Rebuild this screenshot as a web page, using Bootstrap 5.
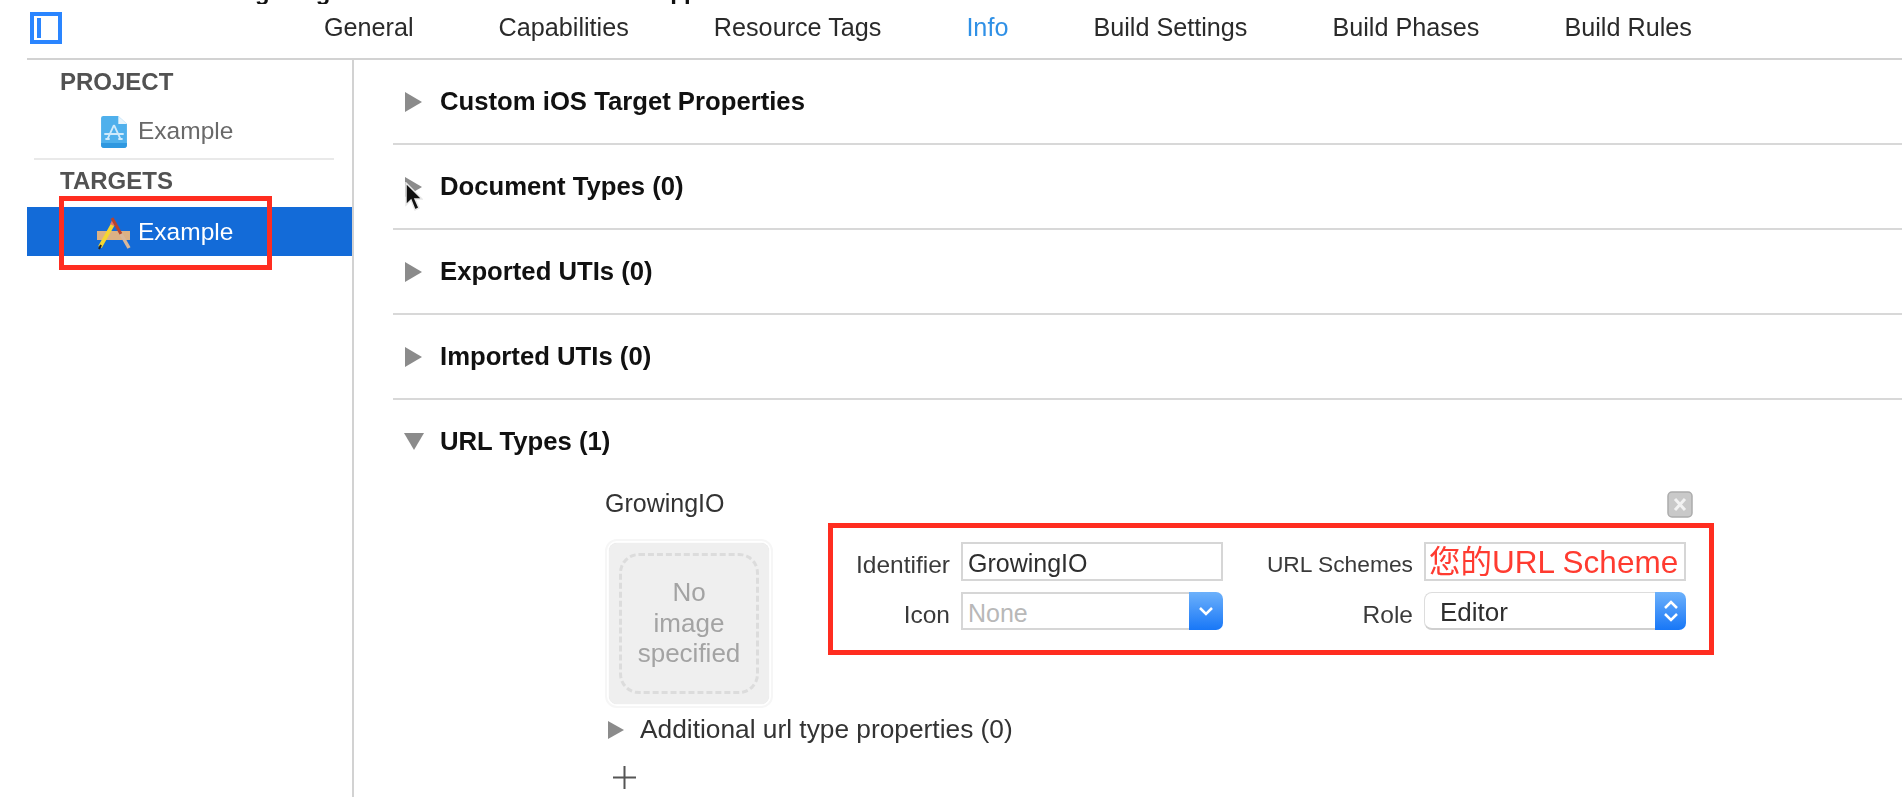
<!DOCTYPE html>
<html lang="en">
<head>
<meta charset="utf-8">
<title>Xcode target info</title>
<link href="https://cdn.jsdelivr.net/npm/bootstrap@5.3.0/dist/css/bootstrap.min.css" rel="stylesheet">
<style>
html,body{height:100%;margin:0;background:#fff;overflow:hidden}
body{font-family:"Liberation Sans",Arial,sans-serif;font-size:24.5px;color:#333}
.shot{width:1902px;height:797px;overflow:hidden;filter:blur(.55px)}
.clipline{height:4px;overflow:hidden;padding-left:255px;font-weight:700;color:#111;line-height:20px}
.clipline span{display:block;margin-top:-18px;font-size:24px}
.clip-b{margin-left:46px}.clip-c{margin-left:340px;letter-spacing:-1px}
.tabbar{height:56px;margin-left:27px;border-bottom:2px solid #d2d2d2}
.panel-ic{margin-left:3px;margin-top:-6px;width:32px;height:32px;flex:none}
.tabs{margin-left:262px;gap:85px}
.tabs .nav-link{padding:0;color:#2a2a2a;line-height:28px;margin-top:-8px;font-size:25.2px}
.tabs .nav-link.active{color:#2f90e6}
.mainrow{height:737px}
.side{width:327px;margin-left:27px;border-right:2px solid #d2d2d2;flex:none}
.sidehead{padding-left:33px;font-weight:700;color:#525252;height:42px;line-height:42px;font-size:24px}
.sidehead-top{padding-top:1px}
.siderow{height:56px;padding-left:73px;gap:10px;color:#696969;padding-top:3px}
.proj-ic{width:28px;height:34px;flex:none}
.sidediv{height:2px;background:#e9e9e9;margin:0 18px 0 7px}
.sidesel{height:49px;margin-top:5px;background:#136bd8;color:#fff;padding-left:70px;gap:7px;padding-top:2px}
.redmark{position:absolute;left:32px;top:-11px;width:213px;height:74px;border:5px solid #ff2d20;pointer-events:none}
.content{margin-left:39px;flex:1;min-width:0}
.sect{height:85px;border-bottom:2px solid #d8d8d8;padding-left:12px;gap:18px;font-weight:700;color:#111;font-size:25.7px}
.sect-open{height:82px;border-bottom:0;padding-left:11px;gap:16px;font-weight:700;color:#111;font-size:25.7px}
.tri{width:17px;height:20px;flex:none}
.tri-d{width:20px;height:17px;flex:none}
.cursor-ic{position:absolute;left:10px;top:37px;width:20px;height:30px}
.urlblock{margin-left:212px;margin-top:8px;width:1109px}
.urlname{height:27px;padding-right:21px;color:#333;font-size:25px;padding-top:1px}
.urlrow{margin-top:6px}
.close-ic{width:26px;height:27px;flex:none}
.wellout{width:168px;height:169px;margin-top:16px;padding:2px;border:2px solid #f6f6f6;border-radius:12px;flex:none}
.wellin{height:100%;background:#efefef;border-radius:8px;padding:10px 10px;box-shadow:0 0 1px #ddd}
.welldash{height:100%;border:3px dashed #dcdcdc;border-radius:20px;color:#a3a3a3;text-align:center;line-height:30.5px;padding-top:21px;font-size:26px}
.formbox{margin-left:55px;width:886px;height:132px;border:5px solid #ff2d20;padding-top:14px}
.formgrid{display:grid;grid-template-columns:117px 262px 179px 262px;column-gap:11px;row-gap:11px;grid-template-rows:39px 38px}
.flabel{text-align:right;line-height:45px;color:#3a3a3a;font-size:24.5px}
.flabel-tight{font-size:22.8px}
.ffield.form-control{border:2px solid #d6d6d6;border-radius:0;padding:0 5px;font-size:25px;line-height:38px;color:#2e2e2e;height:39px}
.ffield-red.form-control{color:#ff3b30;font-size:31.5px;padding:0 3px;white-space:nowrap;font-family:"Liberation Sans","Noto Sans CJK SC",sans-serif;line-height:36px;overflow:hidden}
.fselect{height:38px;overflow:hidden}
.fselect-plain{border:2px solid #d6d6d6;border-right:0;background:#fff;color:#b8b8b8;padding-left:5px;line-height:39px;flex:1;font-size:25px}
.fselect-round{border:1px solid #ddd;border-bottom:2px solid #cfcfcf;border-right:0;border-radius:8px 0 0 8px;color:#2e2e2e;padding-left:15px;line-height:38px;flex:1;font-size:26px}
.stepbtn{background:linear-gradient(#6db1fb,#1877f7);border-radius:0 7px 7px 0;flex:none}
.stepbtn-a{width:34px}.stepbtn-b{width:31px}
.addl{height:34px;margin-top:5px;padding-left:3px;gap:16px;color:#333;font-size:26.3px}
.tri-s{width:16px;height:18px;flex:none}
.plus-ic{width:25px;height:25px;margin:18px 0 0 7px;display:block}
</style>
</head>
<body>
<div class="shot">
  <div class="clipline d-flex"><span>g</span><span class="clip-b">g</span><span class="clip-c">pp</span></div>
  <div class="tabbar d-flex align-items-center">
    <svg class="panel-ic" viewBox="0 0 32 32"><rect x="2" y="2" width="28" height="28" fill="#fff" stroke="#2a85ff" stroke-width="4"/><rect x="7" y="6" width="4" height="20" fill="#2a85ff"/></svg>
    <ul class="nav tabs">
      <li class="nav-item"><a class="nav-link" href="#">General</a></li>
      <li class="nav-item"><a class="nav-link" href="#">Capabilities</a></li>
      <li class="nav-item"><a class="nav-link" href="#">Resource Tags</a></li>
      <li class="nav-item"><a class="nav-link active" href="#">Info</a></li>
      <li class="nav-item"><a class="nav-link" href="#">Build Settings</a></li>
      <li class="nav-item"><a class="nav-link" href="#">Build Phases</a></li>
      <li class="nav-item"><a class="nav-link" href="#">Build Rules</a></li>
    </ul>
  </div>
  <div class="mainrow d-flex">
    <aside class="side">
      <div class="sidehead sidehead-top">PROJECT</div>
      <div class="siderow d-flex align-items-center">
        <svg class="proj-ic" viewBox="0 0 26 34" preserveAspectRatio="none"><path d="M3 1H17L25 9V30Q25 33 22 33H4Q1 33 1 30V3Q1 1 3 1Z" fill="#4fb0ec"/><path d="M17 1V9H25Z" fill="#e8f4fc"/><path d="M1 28H25V30Q25 33 22 33H4Q1 33 1 30Z" fill="#2f98e0"/><path d="M13 10L7 24M13 10L19 24M4 19H22M9 24H5M17 24H21" stroke="#cfeafb" stroke-width="1.8" fill="none"/></svg>
        <span>Example</span>
      </div>
      <div class="sidediv"></div>
      <div class="sidehead">TARGETS</div>
      <div class="sidesel d-flex align-items-center position-relative">
        <svg width="34" height="34" viewBox="0 0 34 34"><rect x="0" y="15" width="33" height="9" fill="#dcb184"/><path d="M3 31L16 8" stroke="#f5d631" stroke-width="4"/><path d="M2 33L4 29" stroke="#222" stroke-width="2"/><path d="M15 9L17 5" stroke="#e6756a" stroke-width="4"/><path d="M15 2L24 18" stroke="#b5432f" stroke-width="3"/><path d="M24 18L32 32" stroke="#d9b79a" stroke-width="3.5"/></svg>
        <span>Example</span>
        <div class="redmark"></div>
      </div>
    </aside>
    <main class="content">
      <div class="sect d-flex align-items-center">
        <svg class="tri" viewBox="0 0 17 20"><path d="M0 0L17 10L0 20Z" fill="#8b8b8b"/></svg>
        <span>Custom iOS Target Properties</span>
      </div>
      <div class="sect d-flex align-items-center position-relative">
        <svg class="tri" viewBox="0 0 17 20"><path d="M0 0L17 10L0 20Z" fill="#8b8b8b"/></svg>
        <span>Document Types (0)</span>
        <svg class="cursor-ic" viewBox="0 0 20 30"><path d="M3 1V23L8 18L12 28L16 26L12 17H19Z" fill="#111" stroke="#e8e8e8" stroke-width="1.5"/></svg>
      </div>
      <div class="sect d-flex align-items-center">
        <svg class="tri" viewBox="0 0 17 20"><path d="M0 0L17 10L0 20Z" fill="#8b8b8b"/></svg>
        <span>Exported UTIs (0)</span>
      </div>
      <div class="sect d-flex align-items-center">
        <svg class="tri" viewBox="0 0 17 20"><path d="M0 0L17 10L0 20Z" fill="#8b8b8b"/></svg>
        <span>Imported UTIs (0)</span>
      </div>
      <div class="sect-open d-flex align-items-center">
        <svg class="tri-d" viewBox="0 0 20 17"><path d="M0 0H20L10 17Z" fill="#8b8b8b"/></svg>
        <span>URL Types (1)</span>
      </div>
      <div class="urlblock">
        <div class="urlname d-flex align-items-center justify-content-between">
          <span>GrowingIO</span>
          <svg class="close-ic" viewBox="0 0 26 27"><rect x="1" y="1" width="24" height="25" rx="4" fill="#c9c9c9" stroke="#acacac" stroke-width="1.5"/><path d="M8 8L18 19M18 8L8 19" stroke="#f2f2f2" stroke-width="3"/></svg>
        </div>
        <div class="urlrow d-flex align-items-start">
          <div class="wellout"><div class="wellin"><div class="welldash">No<br>image<br>specified</div></div></div>
          <div class="formbox">
            <div class="formgrid">
              <div class="flabel">Identifier</div>
              <div class="ffield form-control">GrowingIO</div>
              <div class="flabel flabel-tight">URL Schemes</div>
              <div class="ffield ffield-red form-control">您的URL Scheme</div>
              <div class="flabel">Icon</div>
              <div class="fselect d-flex">
                <div class="fselect-plain">None</div>
                <div class="stepbtn stepbtn-a d-flex align-items-center justify-content-center"><svg width="16" height="10" viewBox="0 0 16 10"><path d="M2 2L8 8L14 2" stroke="#fff" stroke-width="2.5" fill="none"/></svg></div>
              </div>
              <div class="flabel">Role</div>
              <div class="fselect d-flex">
                <div class="fselect-round">Editor</div>
                <div class="stepbtn stepbtn-b d-flex align-items-center justify-content-center"><svg width="16" height="28" viewBox="0 0 16 28"><path d="M2 11L8 5L14 11M2 17L8 23L14 17" stroke="#fff" stroke-width="2.5" fill="none"/></svg></div>
              </div>
            </div>
          </div>
        </div>
        <div class="addl d-flex align-items-center">
          <svg class="tri-s" viewBox="0 0 16 18"><path d="M0 0L16 9L0 18Z" fill="#8b8b8b"/></svg>
          <span>Additional url type properties (0)</span>
        </div>
        <svg class="plus-ic" viewBox="0 0 25 25"><path d="M12.5 1V24M1 12.5H24" stroke="#555" stroke-width="2"/></svg>
      </div>
    </main>
  </div>
</div>
<script src="https://cdn.jsdelivr.net/npm/bootstrap@5.3.0/dist/js/bootstrap.bundle.min.js"></script>
</body>
</html>
